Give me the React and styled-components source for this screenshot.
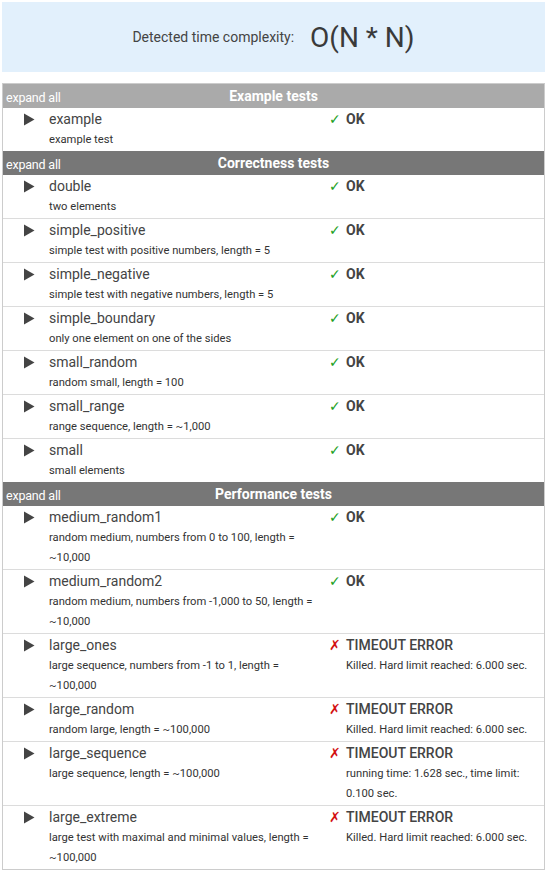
import React from "react";
import styled, { createGlobalStyle } from "styled-components";

const Global = createGlobalStyle`
  html, body { margin: 0; padding: 0; background: #fff; }
  body { font-family: Roboto, "Liberation Sans", Arial, sans-serif; color: #444; }
  * { box-sizing: border-box; }
`;

const Page = styled.div`
  padding: 2px 2px 2px 2px;
  display: flex;
  flex-direction: column;
  gap: 11px;
`;

const Banner = styled.div`
  height: 70px;
  background: #e2f0fc;
  display: flex;
  align-items: center;
  justify-content: center;
  gap: 16px;
  padding-left: 0;
`;

const BannerLabel = styled.span`
  font-size: 14px;
  color: #444;
`;

const BannerValue = styled.span`
  font-size: 28px;
  color: #3a3a3a;
`;

const Table = styled.div`
  border: 1px solid #ccc;
  display: flex;
  flex-direction: column;
`;

const Header = styled.div`
  height: 24px;
  background: ${(p) => (p.$light ? "#aaaaaa" : "#777777")};
  color: #fff;
  display: grid;
  grid-template-columns: 1fr auto 1fr;
  align-items: center;
  padding: 0 3px;
`;

const Expand = styled.span`
  font-size: 12.5px;
  letter-spacing: -0.2px;
  padding-top: 2px;
`;

const Title = styled.span`
  font-size: 14px;
  font-weight: bold;
`;

const Row = styled.div`
  display: grid;
  grid-template-columns: 46px 281px 16px 1fr;
  border-top: ${(p) => (p.$first ? "none" : "1px solid #dcdcdc")};
  padding-bottom: 1px;
`;

const ArrowCell = styled.div`
  height: 22px;
  display: flex;
  align-items: center;
  padding-left: 20px;
`;

const NameCell = styled.div`
  padding-right: 10px;
`;

const Name = styled.div`
  font-size: 14px;
  line-height: 22px;
  color: #444;
`;

const Desc = styled.div`
  font-size: 11.2px;
  line-height: 20px;
  color: #333;
`;

const Mark = styled.div`
  font-family: "DejaVu Sans", sans-serif;
  font-size: 14px;
  line-height: 22px;
  margin-left: -1px;
  color: ${(p) => (p.$ok ? "#22a022" : "#d31010")};
  font-style: ${(p) => (p.$ok ? "normal" : "italic")};
`;

const StatusCell = styled.div`
  padding-right: 4px;
`;

const Status = styled.div`
  font-size: 14px;
  line-height: 22px;
  font-weight: ${(p) => (p.$ok ? "bold" : 500)};
  color: #444;
`;

const Arrow = () => (
  <svg width="12" height="13" viewBox="0 0 12 13">
    <polygon points="1,0.5 11.5,6.5 1,12.5" fill="#444" />
  </svg>
);

const OKMSG = { ok: true, status: "OK" };
const KILLED = {
  ok: false,
  status: "TIMEOUT ERROR",
  detail: "Killed. Hard limit reached: 6.000 sec.",
};

const sections = [
  {
    title: "Example tests",
    light: true,
    tests: [{ name: "example", desc: "example test", ...OKMSG }],
  },
  {
    title: "Correctness tests",
    tests: [
      { name: "double", desc: "two elements", ...OKMSG },
      { name: "simple_positive", desc: "simple test with positive numbers, length = 5", ...OKMSG },
      { name: "simple_negative", desc: "simple test with negative numbers, length = 5", ...OKMSG },
      { name: "simple_boundary", desc: "only one element on one of the sides", ...OKMSG },
      { name: "small_random", desc: "random small, length = 100", ...OKMSG },
      { name: "small_range", desc: "range sequence, length = ~1,000", ...OKMSG },
      { name: "small", desc: "small elements", ...OKMSG },
    ],
  },
  {
    title: "Performance tests",
    tests: [
      { name: "medium_random1", desc: "random medium, numbers from 0 to 100, length = ~10,000", ...OKMSG },
      { name: "medium_random2", desc: "random medium, numbers from -1,000 to 50, length = ~10,000", ...OKMSG },
      { name: "large_ones", desc: "large sequence, numbers from -1 to 1, length = ~100,000", ...KILLED },
      { name: "large_random", desc: "random large, length = ~100,000", ...KILLED },
      {
        name: "large_sequence",
        desc: "large sequence, length = ~100,000",
        ok: false,
        status: "TIMEOUT ERROR",
        detail: "running time: 1.628 sec., time limit: 0.100 sec.",
      },
      { name: "large_extreme", desc: "large test with maximal and minimal values, length = ~100,000", ...KILLED },
    ],
  },
];

export default function App() {
  return (
    <>
      <Global />
      <Page>
        <Banner>
          <BannerLabel>Detected time complexity:</BannerLabel>
          <BannerValue>O(N * N)</BannerValue>
        </Banner>
        <Table>
          {sections.map((s) => (
            <React.Fragment key={s.title}>
              <Header $light={s.light}>
                <Expand>expand all</Expand>
                <Title>{s.title}</Title>
                <span />
              </Header>
              {s.tests.map((t, i) => (
                <Row key={t.name} $first={i === 0}>
                  <ArrowCell>
                    <Arrow />
                  </ArrowCell>
                  <NameCell>
                    <Name>{t.name}</Name>
                    <Desc>{t.desc}</Desc>
                  </NameCell>
                  <Mark $ok={t.ok}>{t.ok ? "✓" : "✗"}</Mark>
                  <StatusCell>
                    <Status $ok={t.ok}>{t.status}</Status>
                    {t.detail && <Desc>{t.detail}</Desc>}
                  </StatusCell>
                </Row>
              ))}
            </React.Fragment>
          ))}
        </Table>
      </Page>
    </>
  );
}
